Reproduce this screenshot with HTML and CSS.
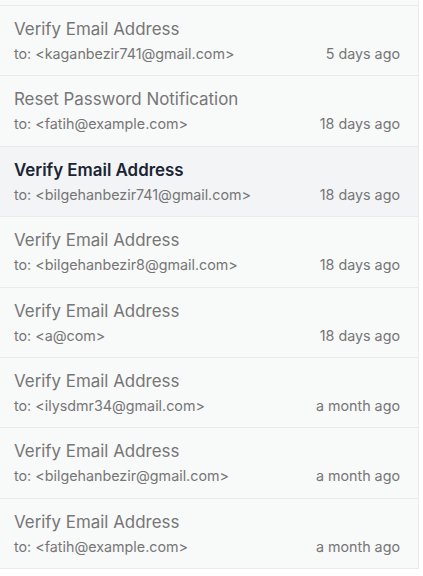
FILE: index.html
```html
<!DOCTYPE html>
<html>
<head>
<meta charset="utf-8">
<link rel="stylesheet" href="styles.css">
</head>
<body>
<div class="list">
  <div class="row"><div class="title">Verify Email Address</div><div class="meta"><span>to: &lt;kaganbezir741@gmail.com&gt;</span><span>5 days ago</span></div></div>
  <div class="row"><div class="title">Reset Password Notification</div><div class="meta"><span>to: &lt;fatih@example.com&gt;</span><span>18 days ago</span></div></div>
  <div class="row active"><div class="title">Verify Email Address</div><div class="meta"><span>to: &lt;bilgehanbezir741@gmail.com&gt;</span><span>18 days ago</span></div></div>
  <div class="row"><div class="title">Verify Email Address</div><div class="meta"><span>to: &lt;bilgehanbezir8@gmail.com&gt;</span><span>18 days ago</span></div></div>
  <div class="row"><div class="title">Verify Email Address</div><div class="meta"><span>to: &lt;a@com&gt;</span><span>18 days ago</span></div></div>
  <div class="row"><div class="title">Verify Email Address</div><div class="meta"><span>to: &lt;ilysdmr34@gmail.com&gt;</span><span>a month ago</span></div></div>
  <div class="row"><div class="title">Verify Email Address</div><div class="meta"><span>to: &lt;bilgehanbezir@gmail.com&gt;</span><span>a month ago</span></div></div>
  <div class="row"><div class="title">Verify Email Address</div><div class="meta"><span>to: &lt;fatih@example.com&gt;</span><span>a month ago</span></div></div>
</div>
</body>
</html>
```
FILE: styles.css
```css
html, body { margin: 0; padding: 0; background: #ffffff; }
body { font-family: Inter, "Noto Sans", sans-serif; }
.list {
  width: 418px;
  border-right: 1px solid #e8eaeb;
  background: #f8f9f9;
  padding-top: 5px;
}
.row {
  border-top: 1px solid #e8eaeb;
  padding: 11px 18px 11.4px 14px;
  background: #f8f9f9;
}
.row:last-child { border-bottom: 1px solid #e8eaeb; }
.title {
  font-size: 16.9px;
  line-height: 24px;
  color: #767676;
}
.meta {
  margin-top: 3px;
  display: flex;
  justify-content: space-between;
  font-size: 14.3px;
  line-height: 20px;
  color: #767676;
}
.row.active { background: #f2f4f6; }
.row.active .title { color: #1c2433; font-weight: 600; }
```
